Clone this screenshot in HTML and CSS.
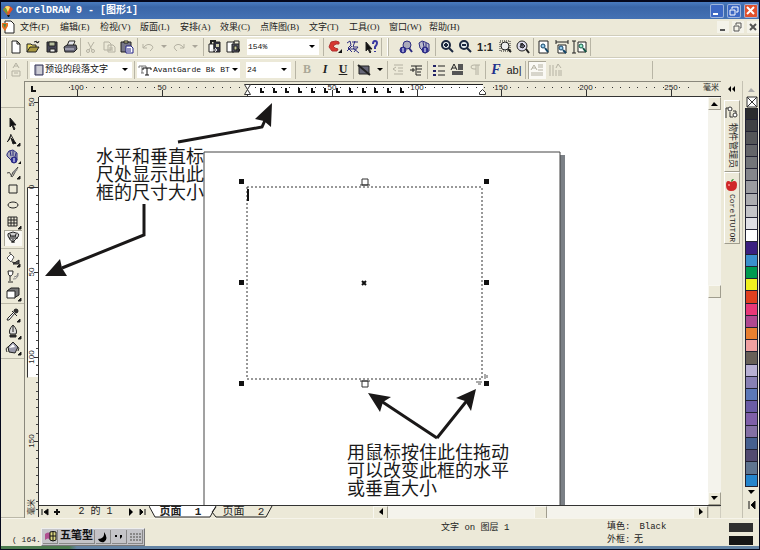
FILE: index.html
```html
<!DOCTYPE html>
<html lang="zh-CN">
<head>
<meta charset="utf-8">
<title>CorelDRAW 9 - [图形1]</title>
<link rel="stylesheet" href="styles.css">
</head>
<body>
<div class="app">
  <header class="title">
    <svg width="12" height="14" viewBox="0 0 12 14"><path d="M2 4Q5 0 9 3L11 5L6 12L1 6Z" fill="#e85020"/><path d="M3 3Q5 1 8 3L6 8Z" fill="#f8e070"/><path d="M1 5L4 4L6 11Z" fill="#58a840"/><path d="M5 11h3l-1 2h-1z" fill="#111"/></svg>
    <h1>CorelDRAW 9 - [图形1]</h1>
    <div class="winbtns">
      <button aria-label="最小化"><svg width="14" height="14"><path d="M3 10h5" stroke="#fff" stroke-width="2"/></svg></button>
      <button aria-label="还原"><svg width="14" height="14"><path d="M5 5V3h6v5H9M3 6h5v5H3z" stroke="#fff" fill="none"/></svg></button>
      <button class="close" aria-label="关闭"><svg width="14" height="14"><path d="M3 3l7 7M10 3l-7 7" stroke="#fff" stroke-width="2"/></svg></button>
    </div>
  </header>

  <nav class="menu">
    <svg width="13" height="14" viewBox="0 0 13 14"><path d="M3 1h6l3 3v9H3z" fill="#fff" stroke="#222"/><path d="M0 3h6v3l-3 5-3-4z" fill="#e87020"/><path d="M1 4h3l-1 4z" fill="#484"/></svg>
    <button>文件(F)</button><button>编辑(E)</button><button>检视(V)</button><button>版面(L)</button><button>安排(A)</button><button>效果(C)</button><button class="wide">点阵图(B)</button><button>文字(T)</button><button>工具(O)</button><button>窗口(W)</button><button>帮助(H)</button>
    <div class="docbtns">
      <button aria-label="最小化文档"><svg width="12" height="12"><path d="M3 9h5" stroke="#555" stroke-width="2"/></svg></button>
      <button aria-label="还原文档"><svg width="12" height="12"><path d="M4 4V2h5v5H8M2 5h5v5H2z" stroke="#555" fill="none"/></svg></button>
      <button aria-label="关闭文档"><svg width="12" height="12"><path d="M3 3l6 6M9 3l-6 6" stroke="#555" stroke-width="2"/></svg></button>
    </div>
  </nav>

  <div class="bar standard">
    <i class="grip"></i>
    <button aria-label="新建"><svg class="ic"><path d="M5 3h5l3 3v9H5zM10 3v3h3" fill="#fff"/></svg></button>
    <button aria-label="打开"><svg class="ic"><path d="M2 14V6h4l1 1h4v2" fill="#e8d860"/><path d="M2 14l3-5h9l-3 5z" fill="#a89840"/><path d="M9 4q3-2 4 1m1-2l-1 2-2-1"/></svg></button>
    <button aria-label="保存"><svg class="ic"><path d="M4 4h10v10H4z" fill="#445"/><path d="M6 4h6v4H6z" fill="#b8c0a0"/><path d="M7 11h5v3H7z" fill="#eee"/></svg></button>
    <button aria-label="打印"><svg class="ic"><path d="M6 8l2-5h6l-2 5z" fill="#fff"/><path d="M3 9l3-2h9l1 4-3 3H4z" fill="#667"/><path d="M4 11h9M8 5h4" stroke="#ccd"/></svg></button>
    <i class="sep"></i>
    <button aria-label="剪切" disabled><svg class="ic dim"><path d="M6 4l4 8M12 4L7 12"/><circle cx="6" cy="13" r="1.5"/><circle cx="11" cy="13" r="1.5"/></svg></button>
    <button aria-label="复制" disabled><svg class="ic dim"><path d="M4 4h5l2 2v6H4zM8 7h5l2 2v5H8zM9 10h4M9 12h4"/></svg></button>
    <button aria-label="粘贴"><svg class="ic"><path d="M3 4h10v10H3z" fill="#778"/><path d="M6 3h4v2H6z" fill="#dd9"/><path d="M8 8h5l2 2v5H8z" fill="#fff" stroke="#228"/><path d="M9 11h4M9 13h4" stroke="#228"/></svg></button>
    <i class="sep"></i>
    <button aria-label="撤消" disabled><svg class="ic dim"><path d="M4 6v4h4M4 10q4-5 8-3t-1 6"/></svg></button>
    <button class="drop" aria-label="撤消列表" disabled><svg width="8" height="5"><path d="M1 1h6l-3 3z" fill="#aaa69a"/></svg></button>
    <button aria-label="重做" disabled><svg class="ic dim"><path d="M14 6v4h-4M14 10q-4-5-8-3t1 6"/></svg></button>
    <button class="drop" aria-label="重做列表" disabled><svg width="8" height="5"><path d="M1 1h6l-3 3z" fill="#aaa69a"/></svg></button>
    <i class="sep loose"></i>
    <button aria-label="导入"><svg class="ic"><path d="M3 6h5v8H3z" fill="#fff"/><path d="M8 4h6v10H8z" fill="#334"/><path d="M10 6h3v3h-3z" fill="#cca" stroke="none"/><path d="M5 6V3h5" stroke-width="2"/><path d="M5 12h6M9 10l2 2-2 2" stroke="#ddd"/></svg></button>
    <button aria-label="导出"><svg class="ic"><path d="M3 4h7v10H3z" fill="#fff"/><path d="M8 6h7v8H8z" fill="#556"/><path d="M10 5V3h5v3" stroke-width="1"/><path d="M10 8h3v4h-3z" fill="#cc9"/><path d="M12 12h4M14 10l2 2-2 2"/></svg></button>
    <label class="combo zoom"><select aria-label="缩放级别"><option>154%</option></select><svg width="8" height="5"><path d="M1 1h6l-3 3z"/></svg></label>
    <i class="sep loose"></i>
    <button aria-label="应用程序启动器"><svg class="ic"><path d="M13 6V4L10 3 5 4 3 9l3 4h5l1-2-3-1-2-2 3-2z" fill="#d83830" stroke="#b03030"/><path d="M12 15h4v-4z" fill="#111" stroke="none"/></svg></button>
    <button aria-label="Corel 图形社区"><svg class="ic blue"><path d="M3 5l3-2 1 4-3 3 4 4M8 4h6M11 3l-2 6h5l-4 5M3 13l5-5M9 10l6 5M6 11h6"/></svg></button>
    <button aria-label="这是什么"><svg class="ic"><path d="M4 4v9l2-2 2 4 1-1-2-3h3z" fill="#111"/><path d="M11 6q0-3 2-3t2 2-2 4v2M13 13v1" stroke="#3838a0" stroke-width="2"/></svg></button>
    <i class="sep"></i>
    <i class="grip second"></i>
    <button aria-label="缩放上一步"><svg class="ic blue"><circle cx="10" cy="7" r="4" fill="#aab"/><path d="M12 10l3 4" stroke-width="2"/><circle cx="6" cy="12" r="3" fill="#339"/><path d="M6 10v4" stroke="#fff"/></svg></button>
    <button aria-label="平移"><svg class="ic blue"><path d="M4 5l3-2 3 1 4 2v7l-4 2-5-5z" fill="#bbc"/><path d="M8 4l1 5M11 5v5"/><circle cx="10" cy="12" r="3" fill="#339"/><path d="M10 10v4" stroke="#fff"/></svg></button>
    <i class="sep loose"></i>
    <button aria-label="放大"><svg class="ic bold"><circle cx="8" cy="7" r="4" fill="#e8eef0"/><path d="M11 10l4 4M6 7h4M8 5v4"/></svg></button>
    <button aria-label="缩小"><svg class="ic bold"><circle cx="8" cy="7" r="4" fill="#e8eef0"/><path d="M11 10l4 4M6 7h4"/></svg></button>
    <button class="actual" aria-label="实际大小">1:1</button>
    <button aria-label="缩放选定范围"><svg class="ic"><circle cx="9" cy="8" r="4" fill="#eee"/><path d="M12 11l3 3" stroke-width="2"/><path d="M4 3h10v10H4z" stroke-dasharray="1 1"/></svg></button>
    <button aria-label="缩放全部对象"><svg class="ic"><circle cx="8" cy="8" r="5" fill="#dde"/><path d="M12 11l3 4" stroke-width="2"/><path d="M6 9l2-4 3 3-2 2zM6 6h2v2" fill="#667"/></svg></button>
    <i class="sep"></i>
    <button aria-label="缩放页面"><svg class="ic"><path d="M4 3h9v12H4z" fill="#fff"/><circle cx="8" cy="8" r="2" fill="#9ce" stroke="#146"/><path d="M10 10l3 4" stroke="#146" stroke-width="2"/></svg></button>
    <button aria-label="缩放页宽"><svg class="ic"><path d="M3 4h12M3 2v4M15 2v4M5 7h8v8H5z" fill="#fff"/><circle cx="8" cy="10" r="2" fill="#9ce" stroke="#146"/><path d="M10 12l3 3" stroke="#146" stroke-width="2"/></svg></button>
    <button aria-label="缩放页高"><svg class="ic"><path d="M3 3v12M1 3h4M1 15h4M7 4h8v10H7z" fill="#fff"/><circle cx="10" cy="8" r="2" fill="#9ec" stroke="#154"/><path d="M12 10l3 4" stroke="#154" stroke-width="2"/></svg></button>
    <i class="sep"></i>
  </div>

  <div class="bar text">
    <i class="grip"></i>
    <button aria-label="样式" disabled><svg class="ic dim"><path d="M6 7l3-5 3 5M7 5h4M5 10h8v5H5zM7 12h4"/></svg></button>
    <i class="sep loose"></i>
    <label class="combo style"><svg width="11" height="12"><path d="M2 1h8v10H2z" fill="#aab" stroke="#335"/><path d="M4 3h5M4 5h5M4 7h5M4 9h5" stroke="#eee"/></svg><select aria-label="样式列表"><option>预设的段落文字</option></select><svg width="8" height="5"><path d="M1 1h6l-3 3z"/></svg></label>
    <i class="sep loose"></i>
    <label class="combo font"><svg width="14" height="12"><path d="M1 4V2h7v2M4 2v7M3 9h3" stroke="#777" fill="none"/><path d="M5 6V4h8v2M9 4v7M7 11h4" stroke="#111" fill="none"/></svg><select aria-label="字体列表"><option>AvantGarde Bk BT</option></select><svg width="8" height="5"><path d="M1 1h6l-3 3z"/></svg></label>
    <label class="combo size"><select aria-label="字体大小"><option>24</option></select><svg width="8" height="5"><path d="M1 1h6l-3 3z"/></svg></label>
    <i class="sep loose"></i>
    <button class="letter dimtext" aria-label="粗体" disabled><b>B</b></button>
    <button class="letter" aria-label="斜体"><b><em>I</em></b></button>
    <button class="letter" aria-label="下划线"><b><u>U</u></b></button>
    <i class="sep"></i>
    <button aria-label="文本填充"><svg class="ic"><path d="M4 5h10v8H4z" fill="#667"/><path d="M3 4l12 10" stroke-width="2"/></svg></button>
    <button class="drop" aria-label="对齐"><svg width="8" height="5"><path d="M1 1h6l-3 3z"/></svg></button>
    <i class="sep"></i>
    <button aria-label="减少缩进" disabled><svg class="ic dim"><path d="M5 4h9M9 7h5M9 10h5M5 13h9M7 6L4 8l3 2"/></svg></button>
    <button aria-label="增加缩进"><svg class="ic"><path d="M4 5h11M9 8h6M10 11h4M9 14h5M3 9h5M6 7v4M9 5v9"/></svg></button>
    <i class="sep loose"></i>
    <button aria-label="项目符号"><svg class="ic"><path d="M8 5h7M8 10h7M8 14h7"/><path d="M3 5h3M3 10h3M3 14h3" stroke="#226" stroke-width="2"/></svg></button>
    <button aria-label="首字下沉"><svg class="ic"><path d="M10 4h5M10 6h5M10 8h5M4 11h11M4 13h11" stroke="#555" stroke-width="2"/><path d="M3 9l3-6 3 6M4 7h4"/></svg></button>
    <button aria-label="非打印字符" disabled><svg class="ic dim"><path d="M14 4H8q-3 0-3 2t3 2h2M10 4v10M12 4v10"/></svg></button>
    <i class="sep"></i>
    <button class="letter fmt" aria-label="格式化文本"><b><em>F</em></b></button>
    <button class="letter ab" aria-label="编辑文本">ab|</button>
    <i class="sep loose"></i>
    <button class="pressed" aria-label="水平文本"><svg class="ic dim"><path d="M3 9l3-5 3 5M4 7h4M10 4h5M10 6h5M10 9h5M3 12h12M3 14h12"/></svg></button>
    <button aria-label="垂直文本" disabled><svg class="ic dim"><path d="M4 4v11M7 4v11M10 9v6M13 9v6M10 7l2-4 3 4M15 9v6"/></svg></button>
    <i class="sep end"></i>
  </div>

  <main class="work">
    <aside class="toolbox">
      <div class="group eight">
        <button aria-label="挑选工具"><svg class="ic"><path d="M6 3v9l2-2 2 5 1-1-2-4h3z" fill="#111"/></svg></button>
        <button aria-label="形状工具"><svg class="ic"><path d="M3 11q3-1 4-8M7 4l5 9M7 7l5 5-3 1z" fill="#111"/><path d="M13 15h3v-3z" fill="#111"/></svg></button>
        <button aria-label="缩放工具"><svg class="ic blue"><path d="M3 6l2-3 4-1 4 3v7l-4 2-6-6z" fill="#aab"/><path d="M6 3l1 5M9 3v5M12 5l-1 4"/><circle cx="10" cy="12" r="3" fill="#339"/><path d="M10 10v4" stroke="#fff"/><path d="M14 16h3v-3z" fill="#111" stroke="none"/></svg></button>
        <button aria-label="手绘工具"><svg class="ic"><path d="M3 9q3-2 4 2t3-1l4-7-5 5-2 5" stroke="#444"/><path d="M9 9l4-4" stroke="#888" stroke-width="2"/><path d="M13 15h3v-3z" fill="#111"/></svg></button>
        <button aria-label="矩形工具"><svg class="ic"><path d="M5 5h8v8H5z"/></svg></button>
        <button aria-label="椭圆工具"><svg class="ic"><ellipse cx="9" cy="9" rx="5" ry="3"/></svg></button>
        <button aria-label="图纸工具"><svg class="ic"><path d="M4 4h9v9H4zM4 7h9M4 10h9M7 4v9M10 4v9"/><path d="M14 16h3v-3z" fill="#111"/></svg></button>
        <button class="pressed" aria-label="文本工具"><svg class="ic"><path d="M4 7q-1-3 2-3 3-2 6 0 4 0 2 4-3 3-5 5-3-1-5-6z" fill="#ccc"/><path d="M6 7h6M9 7v7M5 9h3M10 9h4M7 13h4M6 5l1 3M12 5l-1 3"/></svg></button>
      </div>
      <div class="group three">
        <button aria-label="交互式填充"><svg class="ic"><path d="M3 7l4-4 3 3-3 5z" fill="#fff" stroke="#555"/><path d="M6 3V1M8 11l4 1"/><path d="M9 13h6v-4z" fill="#555"/><path d="M13 16h3v-3z" fill="#111"/></svg></button>
        <button aria-label="交互式透明"><svg class="ic"><path d="M4 3h5q0 5-3 5-2 0-2-5zM6 8v5M4 14h5" fill="#fff"/><path d="M10 9q4 0 4-4v3q-2 4-5 3" stroke="#888"/></svg></button>
        <button aria-label="交互式立体化"><svg class="ic"><path d="M3 7l4-3h8v7l-5 3" fill="#777"/><path d="M3 7h8v7H3z" fill="#fff"/><path d="M14 17h3v-3z" fill="#111"/></svg></button>
      </div>
      <div class="group three">
        <button aria-label="滴管工具"><svg class="ic"><circle cx="12" cy="5" r="2" fill="#333"/><path d="M11 7l-6 7H3l1-2 6-6" fill="#fff"/><path d="M8 5l5 5M13 16h3v-3z" fill="#111"/></svg></button>
        <button aria-label="轮廓工具"><svg class="ic"><path d="M9 2q-5 5-3 9h6q2-4-3-9z" fill="#ddd"/><path d="M9 3v6M6 12h6v2H6z" fill="#333"/><path d="M14 16h3v-3z" fill="#111"/></svg></button>
        <button aria-label="填充工具"><svg class="ic"><path d="M4 8l5-5 5 5-3 6-6-1z" fill="#99a"/><path d="M5 9l4-4 2 3z" fill="#fff" stroke="none"/><path d="M4 8q-3 1-1 5M13 7q3 2 1 5"/><path d="M14 16h3v-3z" fill="#111"/></svg></button>
      </div>
    </aside>

    <section class="doc">
      <svg class="hruler" id="hruler"></svg>
      <svg class="vruler" id="vruler"></svg>
      <div class="canvas">
        <svg class="scene">
          <g transform="translate(-39 -97)">
            <path d="M560 155h5v400h-5z" fill="#7b8086"/>
            <path d="M204 560V152h356v408" fill="#fff" stroke="#444"/>
            <rect x="247" y="187" width="235" height="192" fill="none" stroke="#333" stroke-dasharray="2 2"/>
            <path d="M239 179h5v5h-5zM484 179h5v5h-5zM239 280h5v5h-5zM484 280h5v5h-5zM239 381h5v5h-5zM484 381h5v5h-5z" fill="#111"/>
            <path d="M362 179h6v6h-6zM360 185h10M362 381h6v6h-6zM360 381h10" fill="#fff" stroke="#333"/>
            <path d="M362 281l4 4m0-4l-4 4" stroke="#111" stroke-width="2"/>
            <path d="M248 189v12" stroke="#111" stroke-width="2"/>
            <path d="M476 382h6M478 384h3M485 374v5M487 375v3" stroke="#555"/>
            <path d="M178 142l84-15 4-9M144 204v31l-82 33M437 438l-62-41M437 438l36-45" fill="none" stroke="#1a1818" stroke-width="3"/>
            <path d="M272 103l-17 16 9 2 7 6zM45 276l15-17 2 9 5 8zM368 393l23 4-8 5-3 10zM476 389l-20 9 9 3 6 10z" fill="#1a1818"/>
          </g>
        </svg>
        <p class="note ruler-note">水平和垂直标<br>尺处显示出此<br>框的尺寸大小</p>
        <p class="note drag-note">用鼠标按住此住拖动<br>可以改变此框的水平<br>或垂直大小</p>
      </div>
      <div class="vscroll">
        <button aria-label="向上滚动"><svg width="8" height="5"><path d="M0 5h7L3 1z"/></svg></button>
        <i class="thumb"></i>
        <button aria-label="向下滚动"><svg width="8" height="5"><path d="M0 0h7L3 4z"/></svg></button>
      </div>
      <div class="pages">
        <button aria-label="第一页"><svg width="8" height="8"><path d="M1 1v6M7 1L3 4l4 3z" stroke="#111"/></svg></button>
        <button aria-label="添加页面"><svg width="8" height="8"><path d="M4 1v6M1 4h6" stroke="#111" stroke-width="2"/></svg></button>
        <span class="count">2 的 1</span>
        <button aria-label="下一页"><svg width="8" height="8"><path d="M2 0v8l4-4z"/></svg></button>
        <button aria-label="最后一页"><svg width="8" height="8"><path d="M6 1v6M1 1v6l3-3z" stroke="#111"/></svg></button>
        <div class="tabs">
          <svg width="126" height="12"><path d="M0 0l6 11h55l6-11" fill="#fff" stroke="#222"/><path d="M67 1l-4 5 4 5h50l6-11" fill="none" stroke="#222"/></svg>
          <button class="on">页面&nbsp; 1</button><button>页面&nbsp; 2</button>
        </div>
        <div class="hscroll">
          <button aria-label="向左滚动"><svg width="6" height="8"><path d="M5 0v7L1 4z"/></svg></button>
          <i class="thumb"></i>
          <button aria-label="向右滚动"><svg width="6" height="8"><path d="M1 0v7l4-3z"/></svg></button>
        </div>
        <i class="corner"></i>
      </div>
    </section>

    <aside class="dock">
      <button class="collapse" aria-label="折叠泊坞窗"><svg width="8" height="6"><path d="M3 0v6L0 3zM7 0v6L4 3z"/></svg></button>
      <button class="tab"><svg width="13" height="15"><circle cx="5" cy="3" r="2" fill="#fff" stroke="#333"/><circle cx="10" cy="9" r="2" fill="#fff" stroke="#333"/><path d="M1 2h2M1 2v10M5 6v5h3M8 5h3v2" fill="none" stroke="#333"/></svg><span>物件管理员</span></button>
      <button class="tab tutor"><svg width="13" height="14"><path d="M6 4q6-3 6 3t-6 6q-5 0-5-6t5-3z" fill="#d02828"/><path d="M6 4q0-3 3-3-1 2-3 3z" fill="#282"/><circle cx="4" cy="7" r="1" fill="#f99"/></svg><span>CorelTUTOR</span></button>
    </aside>

    <aside class="palette" id="palette">
      <button class="scroll" aria-label="调色板向上"><svg width="8" height="5"><path d="M0 4h7L3 0z" fill="#aaa"/></svg></button>
      <button class="none" aria-label="无色"><svg width="12" height="12"><path d="M1 1h10v10H1zM1 1l10 10M11 1L1 11" fill="#fff" stroke="#333"/></svg></button>
      <div class="swatches" id="swatches"></div>
      <button class="scroll" aria-label="调色板向下"><svg width="8" height="5"><path d="M0 0h7L3 4z"/></svg></button>
      <button class="scroll expand" aria-label="展开调色板"><svg width="8" height="8"><path d="M1 0v8M7 0v8L3 4z" stroke="#111"/></svg></button>
    </aside>
  </main>

  <footer class="status">
    <span class="coord">( 164.</span>
    <div class="ime">
      <button aria-label="输入法"><svg width="13" height="13"><path d="M1 4q3-3 6 0v6q-3-3-6 0z" fill="#b05090"/><path d="M6 2q3-1 6 0v8q-3 2-6 0z" fill="#ddd880" stroke="#111"/><path d="M9 2v9M6 6h6" stroke="#111"/></svg></button>
      <button class="name">五笔型</button>
      <button aria-label="半角"><svg width="12" height="12"><path d="M7 1q1 7-6 7 2 4 6 3 5-3 0-10z"/></svg></button>
      <button aria-label="标点"><svg width="12" height="12"><path d="M2 4h2v2H2zM7 4h2v2L7 8z"/></svg></button>
      <button aria-label="软键盘"><svg width="13" height="12"><path d="M1 3h11M1 6h11M1 9h11" stroke="#888" stroke-width="2" stroke-dasharray="2 1"/></svg></button>
    </div>
    <span class="object">文字 on 图层 1</span>
    <dl>
      <dt>填色:</dt><dd>&nbsp;Black</dd><dd class="chip fill"></dd>
      <dt>外框:</dt><dd>无</dd><dd class="chip outline"></dd>
    </dl>
  </footer>
  <div class="taskbar"></div>
</div>
<script src="script.js"></script>
</body>
</html>
```
FILE: styles.css
```css
* { box-sizing: border-box; }
body {
  margin: 0;
  background: #05081c;
  font-family: "Liberation Mono", "Noto Sans CJK SC", monospace;
  font-size: 9px;
  color: #222;
}
button {
  display: flex;
  align-items: center;
  justify-content: center;
  margin: 0;
  padding: 0;
  border: 0;
  background: none;
  font: inherit;
  color: inherit;
}
i { display: block; flex: none; font-style: normal; }
svg { display: block; flex: none; }

.app {
  display: flex;
  flex-direction: column;
  min-height: 100vh;
  padding: 2px 1px 1px;
}
.title {
  display: flex;
  align-items: center;
  height: 17px;
  padding: 0 1px;
  gap: 2px;
  background: linear-gradient(#4a7cc0, #3a66a8 30%, #4472b4);
}
.title h1 {
  flex: 1;
  margin: 0;
  font-size: 10px;
  line-height: 14px;
  color: #fff;
}
.winbtns { display: flex; gap: 3px; }
.winbtns button {
  width: 14px;
  height: 14px;
  border-radius: 2px;
  background: #3d68c4;
  box-shadow: inset 0 0 0 1px #9db4dc;
}
.winbtns .close { background: #e0502c; }

.menu {
  display: flex;
  align-items: center;
  height: 16px;
  padding-left: 1px;
  background: #ece9d8;
  font-family: "Liberation Serif", "Noto Sans CJK SC", serif;
}
.menu > svg { margin-right: 5px; }
.menu > button { width: 40px; justify-content: flex-start; line-height: 14px; }
.menu .wide { width: 49px; }
.docbtns { display: flex; gap: 3px; margin-left: auto; }
.docbtns button { background: #f4f3ea; }

.bar {
  display: flex;
  align-items: center;
  padding-left: 4px;
  background: #ece9d8;
  border-top: 1px solid #d0cdbc;
  box-shadow: inset 0 1px #fff;
}
.standard { height: 22px; }
.text { height: 24px; }
.grip { width: 2px; height: 18px; background: #fff; border-right: 1px solid #bbb8a8; }
.grip.second { margin: 0 8px 0 4px; }
.sep { width: 1px; height: 18px; margin: 0 1px; background: #b8b5a5; }
.sep.loose { margin: 0 2px; }
.sep.end { margin-left: 88px; }
.bar button { width: 18px; height: 18px; flex: none; }
.bar .drop { width: 13px; }
.ic { width: 18px; height: 18px; fill: none; stroke: #222; }
.ic.dim { stroke: #b4b1a2; }
.ic.blue { stroke: #2c2c80; }
.ic.bold { stroke: #1c2840; stroke-width: 2; }
.bar .actual {
  width: 22px;
  font-family: "Liberation Sans", sans-serif;
  font-size: 11px;
  font-weight: bold;
}
.combo {
  display: flex;
  align-items: center;
  height: 16px;
  padding: 0 3px;
  background: #fff;
}
.combo select {
  flex: 1;
  min-width: 0;
  padding: 0 1px;
  border: 0;
  appearance: none;
  background: none;
  font-family: "Liberation Mono", "Noto Sans CJK SC", monospace;
  font-size: 8px;
  line-height: 14px;
  color: #111;
}
.combo.style select { font-size: 9px; }
.combo.zoom { width: 72px; margin: 0 2px 0 5px; padding-left: 0; }
.combo.style { width: 102px; }
.combo.font { width: 103px; margin-right: 6px; padding: 0 1px; }
.combo.size { width: 45px; margin-right: 2px; padding-left: 0; }
.bar .letter { font-family: "Liberation Serif", serif; font-size: 12px; }
.bar .dimtext { color: #aaa797; }
.bar .fmt { font-size: 14px; color: #22308c; }
.bar .ab { font-family: "Liberation Sans", sans-serif; font-size: 11px; }
.pressed { background: #faf9f4; box-shadow: inset 1px 1px #aaa797; }

.work { display: flex; flex: 1; background: #ece9d8; min-height: 300px; }
.toolbox {
  display: flex;
  flex-direction: column;
  width: 23px;
  padding-top: 26px;
  border-bottom: 1px solid #bbb8a8;
}
.group {
  display: flex;
  flex-direction: column;
  align-items: center;
  padding-bottom: 2px;
  border-bottom: 1px solid #bbb8a8;
}
.group button { flex: 1; width: 18px; min-height: 0; }
.eight { height: 142px; padding-top: 8px; border-top: 1px solid #bbb8a8; }
.three { height: 55px; padding-top: 3px; }

.doc {
  display: grid;
  flex: 1;
  grid-template: 15px 1fr 13px / 14px 1fr 13px;
  border-left: 1px solid #8a887c;
  border-top: 1px solid #8a887c;
  min-width: 0;
}
.hruler { grid-column: 1 / 4; width: 100%; height: 15px; }
.vruler { grid-row: 2 / 4; width: 14px; height: 100%; }
.hruler text, .vruler text { font: 8px "Liberation Sans", "Noto Sans CJK SC", sans-serif; fill: #222; }
.canvas { position: relative; overflow: hidden; background: #fff; }
.scene { position: absolute; inset: 0; width: 100%; height: 100%; }
.note {
  position: absolute;
  margin: 0;
  font-family: "Noto Sans CJK SC", sans-serif;
  font-size: 18px;
  line-height: 18px;
  white-space: nowrap;
  color: #1a1a1a;
}
.ruler-note { left: 57px; top: 49px; }
.drag-note { left: 308px; top: 345px; }
.vscroll, .hscroll { display: flex; justify-content: space-between; background: #f4f3ec; }
.vscroll { flex-direction: column; }
.vscroll button { height: 13px; }
.vscroll button, .hscroll button, .thumb {
  background: #ece9d8;
  border: 1px solid #f8f7f0;
  border-right-color: #a09d8e;
  border-bottom-color: #a09d8e;
}
.thumb { width: 13px; height: 13px; }
.vscroll .thumb { margin-bottom: 20px; }
.pages {
  display: flex;
  grid-column: 2 / 4;
  align-items: center;
  border-top: 1px solid #333;
}
.pages > button { width: 12px; }
.count { width: 49px; margin: 0 5px 0 8px; text-align: center; font-size: 10px; line-height: 12px; white-space: nowrap; }
.tabs { position: relative; display: flex; width: 126px; font-size: 11px; }
.tabs svg { position: absolute; }
.tabs button { position: relative; width: 64px; height: 12px; line-height: 12px; }
.tabs .on { font-weight: bold; }
.hscroll { flex: 1; height: 13px; margin-left: 98px; }
.hscroll button { width: 15px; }
.corner { width: 13px; height: 13px; border: 1px solid #d0cdbf; }

.dock {
  display: flex;
  flex-direction: column;
  align-items: center;
  width: 22px;
  padding-top: 5px;
  border-right: 1px solid #c4c1b2;
}
.collapse { height: 6px; margin-bottom: 8px; }
.tab {
  flex-direction: column;
  justify-content: flex-start;
  gap: 2px;
  width: 16px;
  height: 72px;
  padding-top: 5px;
  border: 1px solid #fff;
  border-right-color: #a09d8e;
  border-bottom-color: #a09d8e;
}
.tab span { writing-mode: vertical-rl; text-orientation: sideways; line-height: 14px; }
.tutor { font-size: 8px; }

.palette { display: flex; flex-direction: column; align-items: stretch; width: 16px; padding: 4px 1px 0 2px; }
.scroll { height: 10px; }
.none { height: 13px; }
.swatches { display: flex; flex: 1; flex-direction: column; border: solid #223; border-width: 0 1px; }
.swatches button { flex: 1; border-bottom: 1px solid #223; }
.expand { height: 16px; margin-bottom: 5px; }

.status {
  display: flex;
  height: 28px;
  padding: 0 6px 0 11px;
  background: #ece9d8;
  border-top: 1px solid #f6f4ea;
  font-size: 8px;
}
.coord { align-self: flex-end; width: 29px; line-height: 12px; white-space: nowrap; }
.ime {
  display: flex;
  align-self: flex-end;
  gap: 1px;
  height: 18px;
  padding: 1px;
  background: #c4c4c8;
  border: 1px solid #eee;
  border-right-color: #777;
  border-bottom-color: #777;
}
.ime button { width: 15px; border-right: 1px solid #888; border-bottom: 1px solid #888; color: #111; }
.ime .name { width: 36px; font-size: 11px; font-weight: bold; line-height: 13px; }
.object { flex: 1; padding-left: 296px; font-size: 9px; line-height: 18px; white-space: nowrap; }
.status dl {
  display: grid;
  grid-template-columns: 27px 1fr 24px;
  width: 146px;
  margin: 0;
  font-size: 9px;
  line-height: 13px;
  padding-top: 2px;
}
.status dd { margin: 0; }
.chip { height: 9px; align-self: center; }
.fill { background: #303030; }
.outline { background: #161616; }
.taskbar { height: 3px; background: linear-gradient(90deg, #4c7c50 9%, #6484a4 10%); }
```
FILE: script.js
```js
const NS = "http://www.w3.org/2000/svg";

function add(parent, tag, attrs, text) {
  const el = document.createElementNS(NS, tag);
  for (const key in attrs) el.setAttribute(key, attrs[key]);
  if (text) el.textContent = text;
  parent.appendChild(el);
}

// Fifty millimetres cover this many pixels at the current zoom.
const STEP = 84.8;

function horizontalRuler() {
  const svg = document.getElementById("hruler");
  const zero = 222;
  add(svg, "rect", { x: zero, y: 2, width: 236, height: 12, fill: "#fff" });
  add(svg, "path", { d: `M${zero} 2.5h236`, stroke: "#222" });
  add(svg, "path", { d: "M14 14.5h684", stroke: "#333" });
  add(svg, "path", { d: "M7 4v5h4", fill: "none", stroke: "#111", "stroke-width": 2 });
  for (let i = -21; i < 53; i++) {
    const x = Math.round(zero + i * STEP / 10);
    if (i % 10 === 0) {
      add(svg, "path", { d: `M${x + 0.5} 8v6`, stroke: "#333" });
      add(svg, "text", { x, y: 8, "text-anchor": "middle" }, i ? String(Math.abs(i * 5)) : "");
    } else {
      add(svg, "rect", { x, y: 5, width: 1, height: 1, fill: "#333" });
    }
  }
  for (let k = 0; k < 12; k++) {
    const x = Math.round(236 + k * 12.7);
    add(svg, "path", { d: `M${x} 6v4h3`, fill: "none", stroke: "#111", "stroke-width": 2 });
  }
  add(svg, "path", { d: "M219.5 2.5h6l-3 5 3 5h-6l3-5z", fill: "#fff", stroke: "#333" });
  add(svg, "path", { d: "M454.5 12.5v-2l3-3 3 3v2z", fill: "#fff", stroke: "#333" });
  add(svg, "text", { x: 678, y: 8 }, "毫米");
}

function verticalRuler() {
  const svg = document.getElementById("vruler");
  const zero = 90;
  add(svg, "rect", { x: 2, y: zero, width: 12, height: 190, fill: "#fff" });
  add(svg, "path", { d: `M13 ${zero + 0.5}H2.5v190`, fill: "none", stroke: "#333" });
  add(svg, "path", { d: "M13.5 0v420", stroke: "#333" });
  for (let i = -10; i < 39; i++) {
    const y = Math.round(zero + i * STEP / 10);
    if (i % 10 === 0) {
      add(svg, "path", { d: `M9 ${y + 0.5}h4`, stroke: "#333" });
      add(svg, "text", { transform: `translate(9 ${y}) rotate(-90)`, "text-anchor": "middle" }, String(Math.abs(i * 5)));
    } else {
      add(svg, "path", { d: `M11 ${y + 0.5}h2`, stroke: "#444" });
    }
  }
  add(svg, "text", { transform: "translate(9 418) rotate(-90)" }, "毫米");
}

const COLORS = [
  "#2b2c2e", "#404144", "#555659", "#646569", "#737579", "#85868b", "#9b9ba0", "#acacb0",
  "#c4c4c8", "#e0e0e6", "#ffffff", "#3b2080", "#3a90cc", "#009a50", "#f0f020", "#e04020",
  "#e83878", "#b04890", "#e88030", "#f0a0a0", "#686058", "#b8b0d4", "#8880b4", "#5c78b8",
  "#6a5ca5", "#7f5fa8", "#8470a4", "#46608f", "#524a70", "#5f7590", "#2585cc"
];
const swatches = document.getElementById("swatches");
COLORS.forEach(color => {
  const button = document.createElement("button");
  button.setAttribute("aria-label", color);
  button.style.background = color;
  swatches.appendChild(button);
});

horizontalRuler();
verticalRuler();
```
